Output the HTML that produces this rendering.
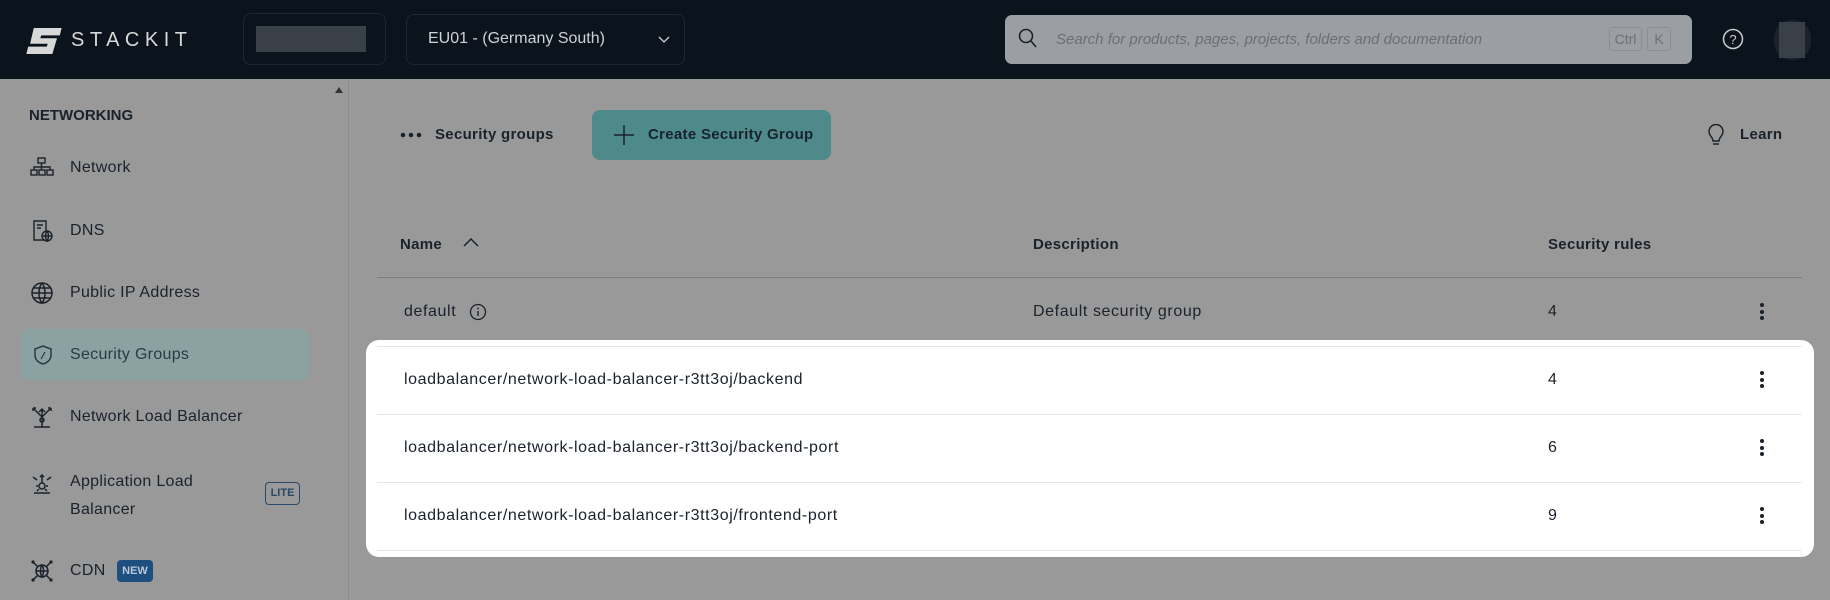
<!DOCTYPE html>
<html><head><meta charset="utf-8"><style>
*{margin:0;padding:0;box-sizing:border-box}
body{width:1830px;height:600px;overflow:hidden;background:#999;font-family:"Liberation Sans",sans-serif;color:#1a222b;position:relative}
.hdr{position:absolute;left:0;top:0;width:1830px;height:79px;background:#0b141d}
.abs{position:absolute}
.side{position:absolute;left:0;top:79px;width:349px;height:521px;background:#999;border-right:1px solid #8c8c8c}
.item{position:absolute;left:70px;font-size:16px;color:#1a222b;letter-spacing:0.3px}
.ic{position:absolute;left:30px}
.t{position:absolute;font-size:16px;letter-spacing:0.6px}
.b{font-weight:bold}
.th{position:absolute;font-size:15px;font-weight:bold;letter-spacing:0.3px}
.line{position:absolute;left:377px;width:1425px;height:1px}
.keb{position:absolute;left:1760px;width:4px}
.keb i{display:block;width:4px;height:4px;border-radius:50%;background:#1a222b;margin-bottom:2.5px}
</style></head><body>
<div class="hdr">
 <svg class="abs" style="left:26px;top:28px" width="36" height="26" viewBox="0 0 38 28"><path d="M8 0H38L36 8H16L15 11H33L28 28H0L2 20H22L23 17H4Z" fill="#d8d8d8"/></svg>
 <div class="abs" style="left:71px;top:29px;color:#d8d8d8;font-size:20px;letter-spacing:5.5px">STACKIT</div>
 <div class="abs" style="left:243px;top:13px;width:143px;height:52px;border:1px solid #1e2833;border-radius:8px"></div>
 <div class="abs" style="left:256px;top:26px;width:110px;height:26px;background:#3a4048"></div>
 <div class="abs" style="left:406px;top:14px;width:279px;height:51px;border:1px solid #1e2833;border-radius:8px"></div>
 <div class="abs" style="left:428px;top:30px;color:#cfd2d5;font-size:16px">EU01 - (Germany South)</div>
 <svg class="abs" style="left:658px;top:36px" width="12" height="8"><path d="M1 1L6 6L11 1" stroke="#cfd2d5" fill="none" stroke-width="1.3"/></svg>
 <div class="abs" style="left:1005px;top:15px;width:687px;height:49px;background:#9b9fa3;border-radius:7px"></div>
 <svg class="abs" style="left:1018px;top:28px" width="20" height="21"><circle cx="8" cy="8" r="6.5" stroke="#1a222b" fill="none" stroke-width="1.6"/><path d="M13 13L18 19" stroke="#1a222b" stroke-width="1.6"/></svg>
 <div class="abs" style="left:1056px;top:31px;font-size:15px;font-style:italic;color:#6c7076">Search for products, pages, projects, folders and documentation</div>
 <div class="abs" style="left:1609px;top:27px;width:33px;height:24px;border:1px solid #8a8e92;border-radius:3px;font-size:14px;color:#6c7076;text-align:center;line-height:22px">Ctrl</div>
 <div class="abs" style="left:1647px;top:27px;width:24px;height:24px;border:1px solid #8a8e92;border-radius:3px;font-size:14px;color:#6c7076;text-align:center;line-height:22px">K</div>
 <svg class="abs" style="left:1721px;top:27px" width="24" height="24"><circle cx="12" cy="12" r="9.5" stroke="#ccc" fill="none" stroke-width="1.5"/><text x="12" y="17" font-size="13" fill="#ccc" text-anchor="middle" font-family="Liberation Sans">?</text></svg>
 <div class="abs" style="left:1774px;top:20px;width:37px;height:40px;background:#1c232c;border-radius:18px"></div>
 <div class="abs" style="left:1779px;top:22px;width:26px;height:36px;background:#3a4048"></div>
</div>
<div class="side">
 <div class="abs" style="left:335px;top:8px;width:0;height:0;border-left:4px solid transparent;border-right:4px solid transparent;border-bottom:6px solid #333"></div>
 <div class="abs b" style="left:29px;top:28px;font-size:15px">NETWORKING</div>
 <svg class="ic" style="top:78px" width="24" height="20" viewBox="0 0 24 20"><g stroke="#1a222b" fill="none" stroke-width="1.4"><rect x="8" y="1" width="7" height="5"/><rect x="1" y="13" width="6" height="5"/><rect x="9" y="13" width="6" height="5"/><rect x="17" y="13" width="6" height="5"/><path d="M11.5 6V13M4 13V10H20V13"/></g></svg>
 <div class="item" style="top:80px">Network</div>
 <svg class="ic" style="top:140px" width="24" height="24" viewBox="0 0 24 24"><g stroke="#1a222b" fill="none" stroke-width="1.4"><path d="M15 21H4V2H16V12"/><path d="M7 6H13M7 9H11"/><circle cx="17" cy="17" r="5"/><path d="M12 17H22M17 12C15 15 15 19 17 22C19 19 19 15 17 12"/></g></svg>
 <div class="item" style="top:143px">DNS</div>
 <svg class="ic" style="top:202px" width="24" height="24" viewBox="0 0 24 24"><g stroke="#1a222b" fill="none" stroke-width="1.5"><circle cx="12" cy="12" r="10"/><path d="M2 12H22M3.5 7H20.5M3.5 17H20.5M12 2C8 7 8 17 12 22C16 17 16 7 12 2"/></g></svg>
 <div class="item" style="top:205px">Public IP Address</div>
 <div class="abs" style="left:21px;top:250px;width:288px;height:51px;background:#8aa3a2;border-radius:8px"></div>
 <svg class="ic" style="top:265px;left:32px" width="22" height="22" viewBox="0 0 22 22"><path d="M11 2L19 5V11C19 16 15 19 11 20C7 19 3 16 3 11V5Z" stroke="#2a3a3f" fill="none" stroke-width="1.5"/><path d="M13 8L9 15" stroke="#2a3a3f" stroke-width="1.2"/></svg>
 <div class="item" style="top:267px;color:#2a3a3f">Security Groups</div>
 <svg class="ic" style="top:326px" width="24" height="24" viewBox="0 0 24 24"><g stroke="#1a222b" fill="none" stroke-width="1.5"><path d="M12 4V15M9 7L12 4L15 7M4 4L12 12L20 4M3 3H6M3 3V6M21 3H18M21 3V6M4 22H20M12 15V22"/><circle cx="12" cy="15" r="2"/></g></svg>
 <div class="item" style="top:329px">Network Load Balancer</div>
 <svg class="ic" style="top:393px" width="24" height="24" viewBox="0 0 24 24"><g stroke="#1a222b" fill="none" stroke-width="1.5"><path d="M12 3V9M10 5L12 3L14 5M3 5L7 8M21 5L17 8M4 21H20"/><circle cx="12" cy="14" r="3"/><path d="M12 9V11M8 14H6M18 14H16M9 17L7 19M15 17L17 19"/></g></svg>
 <div class="item" style="top:389px;line-height:28px">Application Load<br>Balancer</div>
 <div class="abs b" style="left:265px;top:403px;width:35px;height:23px;border:1.3px solid #2a4868;border-radius:4px;font-size:11px;color:#2a4868;text-align:center;line-height:20px">LITE</div>
 <svg class="ic" style="top:480px" width="24" height="24" viewBox="0 0 24 24"><g stroke="#1a222b" fill="none" stroke-width="1.5"><circle cx="12" cy="12" r="6"/><path d="M6 12H18M12 6C10 9 10 15 12 18C14 15 14 9 12 6M3 3L7.5 7.5M21 3L16.5 7.5M3 21L7.5 16.5M21 21L16.5 16.5"/></g><g fill="#1a222b"><circle cx="3" cy="3" r="1.6"/><circle cx="21" cy="3" r="1.6"/><circle cx="3" cy="21" r="1.6"/><circle cx="21" cy="21" r="1.6"/></g></svg>
 <div class="item" style="top:483px">CDN</div>
 <div class="abs b" style="left:117px;top:481px;width:36px;height:22px;background:#1d4f7e;border-radius:4px;font-size:11px;color:#b8c8d8;text-align:center;line-height:22px">NEW</div>
</div>
<!-- main -->
<svg class="abs" style="left:400px;top:132px" width="24" height="6"><circle cx="3" cy="3" r="2.3" fill="#1a222b"/><circle cx="11" cy="3" r="2.3" fill="#1a222b"/><circle cx="19" cy="3" r="2.3" fill="#1a222b"/></svg>
<div class="abs b" style="left:435px;top:126px;font-size:15px;letter-spacing:0.3px">Security groups</div>
<div class="abs" style="left:592px;top:110px;width:239px;height:50px;background:#4f8a8a;border-radius:8px"></div>
<svg class="abs" style="left:614px;top:125px" width="20" height="20"><path d="M10 0V20M0 10H20" stroke="#16232c" stroke-width="1.5"/></svg>
<div class="abs b" style="left:648px;top:126px;font-size:15px;color:#16232c;letter-spacing:0.3px">Create Security Group</div>
<svg class="abs" style="left:1707px;top:124px" width="18" height="24" viewBox="0 0 18 24"><path d="M6 17C6 13 2 12 2 7.5A7 7 0 0 1 16 7.5C16 12 12 13 12 17Z M6 20H12" stroke="#1a222b" fill="none" stroke-width="1.5"/></svg>
<div class="abs b" style="left:1740px;top:126px;font-size:15px;letter-spacing:0.3px">Learn</div>

<div class="th" style="left:400px;top:236px">Name</div>
<svg class="abs" style="left:463px;top:237px" width="16" height="10"><path d="M1 9L8 2L15 9" stroke="#1a222b" fill="none" stroke-width="1.5"/></svg>
<div class="th" style="left:1033px;top:236px">Description</div>
<div class="th" style="left:1548px;top:236px">Security rules</div>
<div class="line" style="top:277px;background:#7e7e7e"></div>
<div class="t" style="left:404px;top:303px">default</div>
<svg class="abs" style="left:469px;top:303px" width="18" height="18"><circle cx="9" cy="9" r="7.5" stroke="#1a222b" fill="none" stroke-width="1.3"/><path d="M9 8V13" stroke="#1a222b" stroke-width="1.4"/><circle cx="9" cy="5.5" r="0.9" fill="#1a222b"/></svg>
<div class="t" style="left:1033px;top:303px">Default security group</div>
<div class="t" style="left:1548px;top:303px">4</div>
<div class="keb" style="top:303px"><i></i><i></i><i></i></div>

<div class="abs" style="left:366px;top:340px;width:1448px;height:217px;background:#fff;border-radius:13px"></div>
<div class="line" style="top:346px;background:#e6e6e6"></div>
<div class="t" style="left:404px;top:371px">loadbalancer/network-load-balancer-r3tt3oj/backend</div>
<div class="t" style="left:1548px;top:371px">4</div>
<div class="keb" style="top:371px"><i></i><i></i><i></i></div>
<div class="line" style="top:414px;background:#e6e6e6"></div>
<div class="t" style="left:404px;top:439px">loadbalancer/network-load-balancer-r3tt3oj/backend-port</div>
<div class="t" style="left:1548px;top:439px">6</div>
<div class="keb" style="top:439px"><i></i><i></i><i></i></div>
<div class="line" style="top:482px;background:#e6e6e6"></div>
<div class="t" style="left:404px;top:507px">loadbalancer/network-load-balancer-r3tt3oj/frontend-port</div>
<div class="t" style="left:1548px;top:507px">9</div>
<div class="keb" style="top:507px"><i></i><i></i><i></i></div>
<div class="line" style="top:550px;background:#e6e6e6"></div>
</body></html>
